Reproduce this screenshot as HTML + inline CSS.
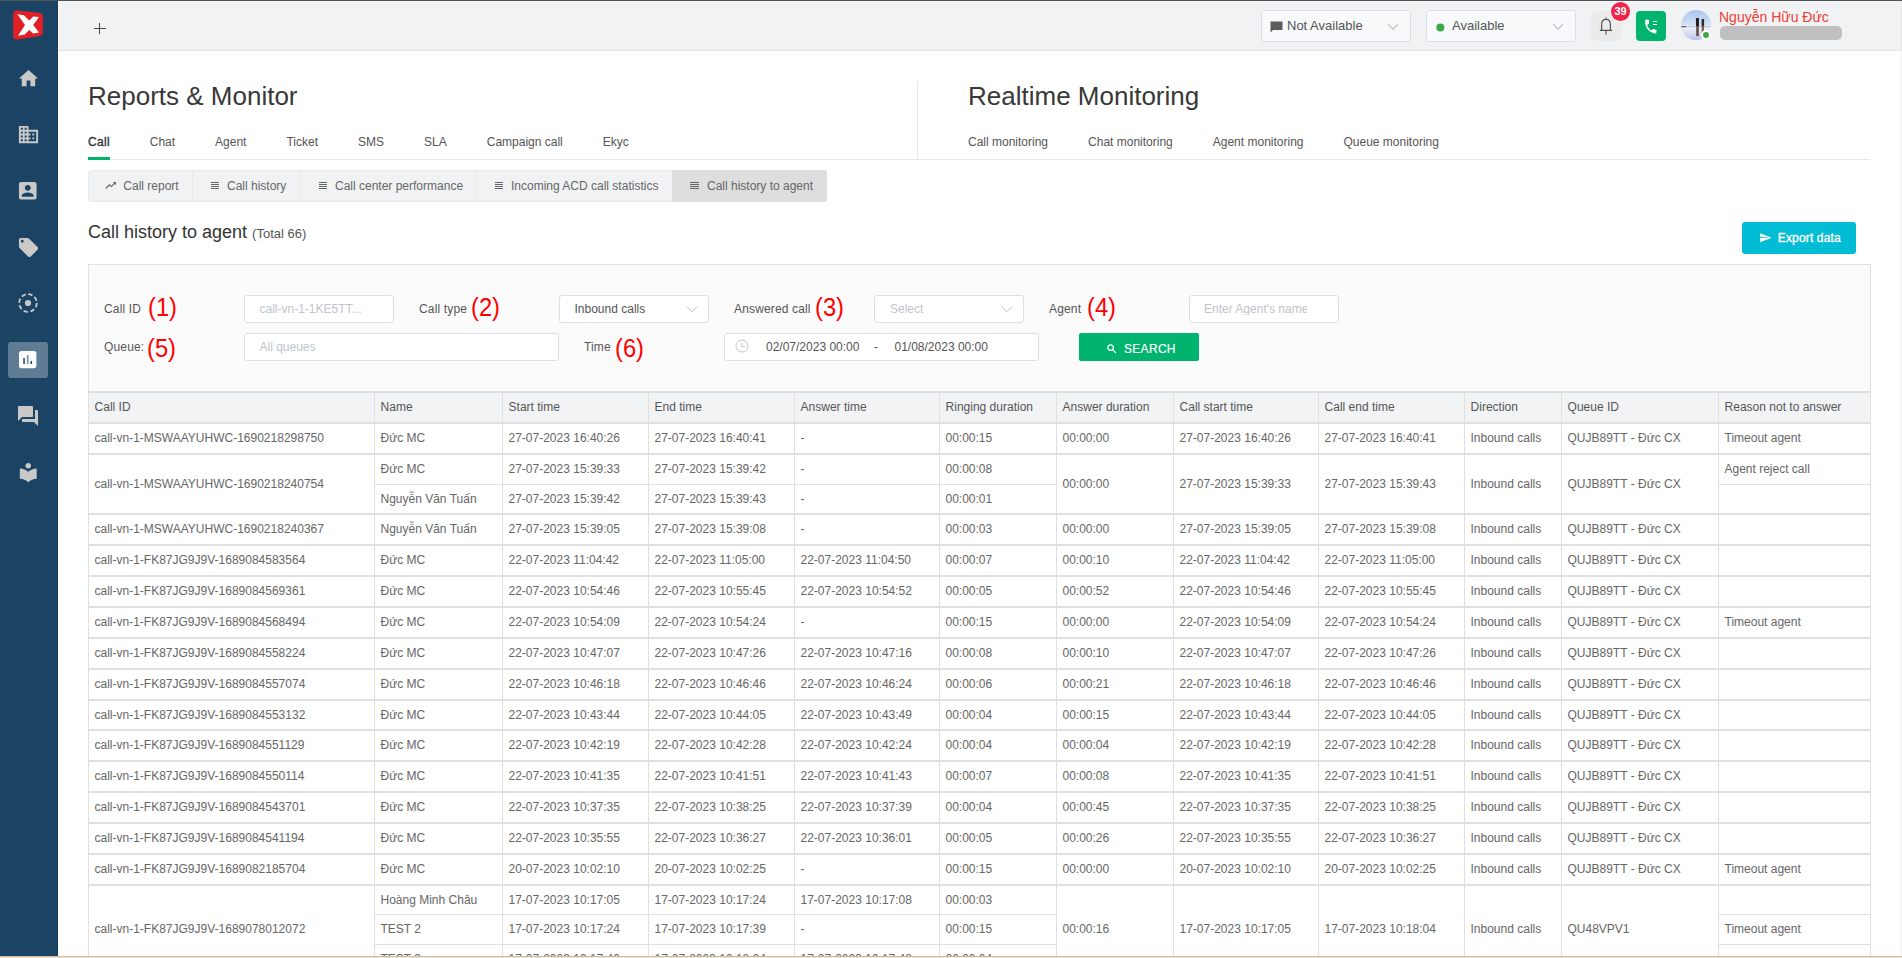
<!DOCTYPE html>
<html><head><meta charset="utf-8"><title>Call history to agent</title>
<style>
html,body{margin:0;padding:0;}
body{width:1902px;height:958px;overflow:hidden;position:relative;background:#fff;font-family:"Liberation Sans",sans-serif;}
.t{position:absolute;line-height:1;white-space:nowrap;font-family:"Liberation Sans",sans-serif;}
svg{position:absolute;overflow:visible;}
</style></head><body>

<div style="position:absolute;left:0px;top:0px;width:1902px;height:1px;background:#505255"></div>
<div style="position:absolute;left:0px;top:1px;width:58px;height:956px;background:#1b4364"></div>
<div style="position:absolute;left:57px;top:1px;width:1px;height:956px;background:#133a5c"></div>
<svg style="left:0;top:0" width="58" height="50" viewBox="0 0 58 50">
<path d="M17.6 10.5 L39 12.7 Q42.8 13.1 42.8 17 L42.8 32 Q42.8 35.8 39 36.2 L17.6 39.5 Q13.2 40.1 13.2 35.5 L13.2 14.6 Q13.2 10.1 17.6 10.5 Z" fill="#e11f26"/>
<path d="M17.4 14.2 L23.9 15.2 L29.3 20.6 L33.2 16.4 L39 17.1 L33.2 25.1 L39 32.6 L33.2 33.4 L29.3 29.9 L24.8 34.6 L18 35.8 L25 25 Z" fill="#fff"/>
</svg>
<div style="position:absolute;left:0px;top:331px;width:57px;height:1px;background:#1a4162"></div>
<div style="position:absolute;left:0px;top:388px;width:57px;height:1px;background:#1a4162"></div>
<svg style="left:16.50px;top:66.98px" width="23" height="23" viewBox="0 0 24 24"><path fill="#c9c9c9" d="M10 20v-6h4v6h5v-8h3L12 3 2 12h3v8z"/></svg>
<svg style="left:16.50px;top:123.00px" width="23" height="23" viewBox="0 0 24 24"><path fill="#c9c9c9" d="M12 7V3H2v18h20V7H12zM6 19H4v-2h2v2zm0-4H4v-2h2v2zm0-4H4V9h2v2zm0-4H4V5h2v2zm4 12H8v-2h2v2zm0-4H8v-2h2v2zm0-4H8V9h2v2zm0-4H8V5h2v2zm10 12h-8v-2h2v-2h-2v-2h2v-2h-2V9h8v10zm-2-8h-2v2h2v-2zm0 4h-2v2h2v-2z"/></svg>
<svg style="left:16.25px;top:178.75px" width="23.5" height="23.5" viewBox="0 0 24 24"><path fill="#c9c9c9" d="M3 5v14c0 1.1.89 2 2 2h14c1.1 0 2-.9 2-2V5c0-1.1-.9-2-2-2H5c-1.11 0-2 .9-2 2zm12 4c0 1.66-1.34 3-3 3s-3-1.34-3-3 1.34-3 3-3 3 1.34 3 3zm-9 8c0-2 4-3.1 6-3.1s6 1.1 6 3.1v1H6v-1z"/></svg>
<svg style="left:16.50px;top:235.50px" width="23" height="23" viewBox="0 0 24 24"><path fill="#c9c9c9" d="M21.41 11.58l-9-9C12.05 2.22 11.55 2 11 2H4c-1.1 0-2 .9-2 2v7c0 .55.22 1.05.59 1.42l9 9c.36.36.86.58 1.41.58.55 0 1.05-.22 1.41-.59l7-7c.37-.36.59-.86.59-1.41 0-.55-.23-1.06-.59-1.42zM5.5 7C4.67 7 4 6.33 4 5.5S4.67 4 5.5 4 7 4.67 7 5.5 6.33 7 5.5 7z"/></svg>
<svg style="left:18.3px;top:292.8px" width="20" height="20" viewBox="0 0 20 20"><circle cx="10" cy="10" r="8.8" fill="none" stroke="#c9c9c9" stroke-width="1.8" stroke-dasharray="4.4 2.5"/><circle cx="10" cy="10" r="3.1" fill="#c9c9c9"/></svg>
<div style="position:absolute;left:8px;top:342px;width:40px;height:36px;background:#607c95;border-radius:3px"></div>
<svg style="left:19.3px;top:351px" width="17.4" height="17.2" viewBox="0 0 17.4 17.2"><rect x="0" y="0" width="17.4" height="17.2" rx="2.6" fill="#fff"/><rect x="4.3" y="7" width="1.5" height="6" fill="#1b4364"/><rect x="7.9" y="4.1" width="1.6" height="8.9" fill="#6f8aa2"/><rect x="11.5" y="9.9" width="1.6" height="3.1" fill="#1b4364"/></svg>
<svg style="left:16.00px;top:404.40px" width="24" height="24" viewBox="0 0 24 24"><path fill="#c9c9c9" d="M21 6h-2v9H6v2c0 .55.45 1 1 1h11l4 4V7c0-.55-.45-1-1-1zm-4 6V3c0-.55-.45-1-1-1H3c-.55 0-1 .45-1 1v14l4-4h10c.55 0 1-.45 1-1z"/></svg>
<svg style="left:16.75px;top:461.29px" width="22.5" height="22.5" viewBox="0 0 24 24"><path fill="#c9c9c9" d="M12 11.55C9.64 9.35 6.48 8 3 8v11c3.48 0 6.64 1.35 9 3.55 2.36-2.19 5.52-3.55 9-3.55V8c-3.48 0-6.64 1.35-9 3.55zM12 8c1.66 0 3-1.34 3-3s-1.34-3-3-3-3 1.34-3 3 1.34 3 3 3z"/></svg>
<div style="position:absolute;left:0px;top:956px;width:1902px;height:1px;background:#c7bba9"></div>
<div style="position:absolute;left:0px;top:957px;width:1902px;height:1px;background:#f7e6ca"></div>
<div style="position:absolute;left:58px;top:1px;width:1844px;height:49px;background:#f1f2f4"></div>
<div style="position:absolute;left:58px;top:1px;width:1px;height:49px;background:#ffffff"></div>
<div style="position:absolute;left:58px;top:50px;width:1844px;height:1px;background:#e1e2e4"></div>
<div style="position:absolute;left:93.5px;top:28px;width:12.5px;height:1px;background:#4a4a4a"></div>
<div style="position:absolute;left:99px;top:23px;width:1px;height:11px;background:#4a4a4a"></div>
<div style="position:absolute;left:1261px;top:10px;width:148px;height:30px;background:#f8f9fa;border:1px solid #dcdfe3;border-radius:3px"></div>
<svg class="bubble" style="left:1270px;top:21px" width="13" height="12" viewBox="0 0 13 12"><path d="M0.5 0.5 H12.5 V9 H3 L0.5 11.5 Z" fill="#5c5c5c"/></svg>
<div class="t" style="left:1287px;top:19px;font-size:13px;color:#555;font-weight:normal;">Not Available</div>
<svg style="left:1387px;top:22.5px" width="12" height="8" viewBox="0 0 12 8"><path d="M1 1.2 L6 6.2 L11 1.2" fill="none" stroke="#b9bcc1" stroke-width="1.1"/></svg>
<div style="position:absolute;left:1426px;top:10px;width:148px;height:30px;background:#f8f9fa;border:1px solid #dcdfe3;border-radius:3px"></div>
<svg style="left:1436px;top:22.5px" width="9" height="9" viewBox="0 0 9 9"><circle cx="4.3" cy="4.6" r="4" fill="#3aaa49"/></svg>
<div class="t" style="left:1452px;top:19px;font-size:13px;color:#555;font-weight:normal;">Available</div>
<svg style="left:1552px;top:22.5px" width="12" height="8" viewBox="0 0 12 8"><path d="M1 1.2 L6 6.2 L11 1.2" fill="none" stroke="#b9bcc1" stroke-width="1.1"/></svg>
<div style="position:absolute;left:1591px;top:10.5px;width:30px;height:30px;background:#ebebeb;border-radius:5px"></div>
<svg style="left:1598px;top:16px" width="16" height="20" viewBox="0 0 16 20"><path d="M8 1.4 V3 M3.6 14 V8.6 Q3.6 3.4 8 3.4 Q12.4 3.4 12.4 8.6 V14 M1.8 14.3 H14.2 M8 15 V18.6" fill="none" stroke="#555" stroke-width="1.2"/></svg>
<svg style="left:1611px;top:2px" width="19" height="19" viewBox="0 0 19 19"><circle cx="9.5" cy="9.5" r="9.5" fill="#ee2549"/></svg>
<div class="t" style="left:1614.5px;top:6px;font-size:11px;color:#fff;font-weight:bold;">39</div>
<div style="position:absolute;left:1636px;top:11px;width:30px;height:30px;background:#00b46e;border-radius:4px"></div>
<svg style="left:1641.5px;top:18px" width="17.5" height="17" viewBox="0 0 24 24"><path transform="rotate(8 12 12)" fill="#fff" d="M6.62 10.79c1.44 2.83 3.76 5.14 6.59 6.59l2.2-2.2c.27-.27.67-.36 1.02-.24 1.12.37 2.33.57 3.57.57.55 0 1 .45 1 1V20c0 .55-.45 1-1 1-9.39 0-17-7.61-17-17 0-.55.45-1 1-1h3.5c.55 0 1 .45 1 1 0 1.25.2 2.45.57 3.57.11.35.03.74-.25 1.02l-2.2 2.2z"/></svg>
<div style="position:absolute;left:1652.5px;top:20.5px;width:4px;height:1.5px;background:#fff"></div>
<div style="position:absolute;left:1652.5px;top:23.5px;width:4px;height:1.5px;background:#fff"></div>
<svg style="left:1680.8px;top:9.8px" width="30.3" height="30.2" viewBox="0 0 30 30">
<defs><linearGradient id="sky" x1="0" y1="0" x2="0" y2="1"><stop offset="0" stop-color="#a9c5ee"/><stop offset="0.5" stop-color="#d6e3f6"/><stop offset="0.58" stop-color="#eef1fa"/><stop offset="1" stop-color="#b8c2ea"/></linearGradient>
<clipPath id="cc"><circle cx="15" cy="15" r="15"/></clipPath></defs>
<g clip-path="url(#cc)"><rect width="30" height="30" fill="url(#sky)"/>
<rect x="0" y="16.3" width="30" height="0.8" fill="#aab2c4"/>
<rect x="0" y="16" width="5" height="1.2" fill="#6a5a5a"/>
<rect x="14.8" y="8" width="3" height="8.5" fill="#241e20"/>
<rect x="15" y="16.5" width="2.7" height="9.5" fill="#6b5446"/>
<rect x="20.4" y="9" width="2.5" height="7.5" fill="#33282a"/>
<rect x="20.5" y="16.5" width="2.3" height="6.5" fill="#7a604e"/>
</g></svg>
<div style="position:absolute;left:1701px;top:29.5px;width:10px;height:10px;background:#fff;border-radius:50%"></div>
<div style="position:absolute;left:1703px;top:31.5px;width:6px;height:6px;background:#3aaa49;border-radius:50%"></div>
<div class="t" style="left:1719px;top:10px;font-size:14px;color:#ee3d35;font-weight:normal;">Nguyễn Hữu Đức</div>
<div style="position:absolute;left:1720px;top:26px;width:122px;height:14px;background:#c0c0c0;border-radius:5px"></div>
<div class="t" style="left:88px;top:83px;font-size:26px;color:#383838;font-weight:normal;">Reports &amp; Monitor</div>
<div class="t" style="left:968px;top:83px;font-size:26px;color:#383838;font-weight:normal;">Realtime Monitoring</div>
<div style="position:absolute;left:88px;top:136px;display:flex;gap:40px;font-size:12px;line-height:1;color:#555;white-space:nowrap"><span style="color:#333;-webkit-text-stroke:0.35px #333;letter-spacing:0.35px;margin-right:-0.35px">Call</span><span style="">Chat</span><span style="">Agent</span><span style="">Ticket</span><span style="">SMS</span><span style="">SLA</span><span style="">Campaign call</span><span style="">Ekyc</span></div>
<div style="position:absolute;left:968px;top:136px;display:flex;gap:40px;font-size:12px;line-height:1;color:#555;white-space:nowrap"><span>Call monitoring</span><span>Chat monitoring</span><span>Agent monitoring</span><span>Queue monitoring</span></div>
<div style="position:absolute;left:88px;top:159px;width:1782px;height:1px;background:#e8e8e8"></div>
<div style="position:absolute;left:88px;top:157px;width:22px;height:3px;background:#00b46e"></div>
<div style="position:absolute;left:917px;top:81px;width:1px;height:78px;background:#e8e8e8"></div>
<div style="position:absolute;left:88px;top:170px;width:739px;height:32px;background:#f1f2f4;border:1px solid #e8e9eb;border-radius:3px;box-sizing:border-box"></div>
<div style="position:absolute;left:672px;top:170px;width:155px;height:32px;background:#dedede;border-radius:0 2px 2px 0"></div>
<div style="position:absolute;left:192px;top:171px;width:1px;height:30px;background:#e6e8ea"></div>
<div style="position:absolute;left:300px;top:171px;width:1px;height:30px;background:#e6e8ea"></div>
<div style="position:absolute;left:476px;top:171px;width:1px;height:30px;background:#e6e8ea"></div>
<svg style="left:105px;top:181px" width="12" height="9" viewBox="0 0 12 9"><path d="M0.8 7.5 L4.4 3.8 L6.4 5.5 L10 1.8" fill="none" stroke="#666" stroke-width="1.15"/><path d="M7.8 1 H11 V4.2 Z" fill="#666"/></svg>
<div style="position:absolute;left:210.5px;top:182px;width:8.5px;height:1px;background:#666"></div>
<div style="position:absolute;left:210.5px;top:184px;width:8.5px;height:1px;background:#666"></div>
<div style="position:absolute;left:210.5px;top:186px;width:8.5px;height:1px;background:#666"></div>
<div style="position:absolute;left:210.5px;top:188px;width:8.5px;height:1px;background:#666"></div>
<div style="position:absolute;left:318.5px;top:182px;width:8.5px;height:1px;background:#666"></div>
<div style="position:absolute;left:318.5px;top:184px;width:8.5px;height:1px;background:#666"></div>
<div style="position:absolute;left:318.5px;top:186px;width:8.5px;height:1px;background:#666"></div>
<div style="position:absolute;left:318.5px;top:188px;width:8.5px;height:1px;background:#666"></div>
<div style="position:absolute;left:494.8px;top:182px;width:8.5px;height:1px;background:#666"></div>
<div style="position:absolute;left:494.8px;top:184px;width:8.5px;height:1px;background:#666"></div>
<div style="position:absolute;left:494.8px;top:186px;width:8.5px;height:1px;background:#666"></div>
<div style="position:absolute;left:494.8px;top:188px;width:8.5px;height:1px;background:#666"></div>
<div style="position:absolute;left:690.3px;top:182px;width:8.5px;height:1px;background:#666"></div>
<div style="position:absolute;left:690.3px;top:184px;width:8.5px;height:1px;background:#666"></div>
<div style="position:absolute;left:690.3px;top:186px;width:8.5px;height:1px;background:#666"></div>
<div style="position:absolute;left:690.3px;top:188px;width:8.5px;height:1px;background:#666"></div>
<div class="t" style="left:123.3px;top:180px;font-size:12px;color:#666;font-weight:normal;">Call report</div>
<div class="t" style="left:227px;top:180px;font-size:12px;color:#666;font-weight:normal;">Call history</div>
<div class="t" style="left:335px;top:180px;font-size:12px;color:#666;font-weight:normal;">Call center performance</div>
<div class="t" style="left:511px;top:180px;font-size:12px;color:#666;font-weight:normal;">Incoming ACD call statistics</div>
<div class="t" style="left:707px;top:180px;font-size:12px;color:#666;font-weight:normal;">Call history to agent</div>
<div class="t" style="left:88px;top:223px;font-size:18px;color:#333">Call history to agent <span style="font-size:13px;color:#555;position:relative;top:0px">(Total 66)</span></div>
<div style="position:absolute;left:1742px;top:222px;width:114px;height:32px;background:#00bcd4;border-radius:3px"></div>
<svg style="left:1759.5px;top:233px" width="12" height="9.4" viewBox="0 0 12 9.4"><path d="M0.2 0.2 L11.6 4.7 L0.2 9.2 Z" fill="#fff"/><path d="M0 4.45 L7.5 4.6" stroke="#00bcd4" stroke-width="0.8"/></svg>
<div class="t" style="left:1777.8px;top:232px;font-size:12px;color:#fff;font-weight:normal;-webkit-text-stroke:0.35px #fff;letter-spacing:0.15px">Export data</div>
<div style="position:absolute;left:88px;top:264px;width:1783px;height:128px;background:#fbfbfb;border:1px solid #e1e1e1;border-bottom:0;box-sizing:border-box"></div>
<div style="position:absolute;left:89px;top:390px;width:1781px;height:1px;background:#ffffff"></div>
<div class="t" style="left:104px;top:303px;font-size:12px;color:#555;font-weight:normal;letter-spacing:0.15px">Call ID</div>
<div class="t" style="left:147.7px;top:294.7px;font-size:25px;color:#ff0000;font-weight:normal;transform:scale(0.95,1.02);transform-origin:0 0">(1)</div>
<div style="position:absolute;left:244px;top:295px;width:150px;height:28px;background:#fff;border:1px solid #dcdfe4;border-radius:3px;box-sizing:border-box"></div>
<div class="t" style="left:259.5px;top:303px;font-size:12px;color:#c0c4cc;font-weight:normal;">call-vn-1-1KE5TT...</div>
<div class="t" style="left:419px;top:303px;font-size:12px;color:#555;font-weight:normal;letter-spacing:0.15px">Call type</div>
<div class="t" style="left:470.7px;top:294.7px;font-size:25px;color:#ff0000;font-weight:normal;transform:scale(0.95,1.02);transform-origin:0 0">(2)</div>
<div style="position:absolute;left:559px;top:295px;width:150px;height:28px;background:#fff;border:1px solid #dcdfe4;border-radius:3px;box-sizing:border-box"></div>
<div class="t" style="left:574.5px;top:303px;font-size:12px;color:#555;font-weight:normal;">Inbound calls</div>
<svg style="left:685.8px;top:305.8px" width="12" height="7" viewBox="0 0 12 7"><path d="M0.6 0.6 L5.8 5.8 L11 0.6" fill="none" stroke="#bfc2c8" stroke-width="1"/></svg>
<div class="t" style="left:734px;top:303px;font-size:12px;color:#555;font-weight:normal;letter-spacing:0.15px">Answered call</div>
<div class="t" style="left:815.2px;top:294.7px;font-size:25px;color:#ff0000;font-weight:normal;transform:scale(0.95,1.02);transform-origin:0 0">(3)</div>
<div style="position:absolute;left:874px;top:295px;width:150px;height:28px;background:#fff;border:1px solid #dcdfe4;border-radius:3px;box-sizing:border-box"></div>
<div class="t" style="left:890px;top:303px;font-size:12px;color:#c0c4cc;font-weight:normal;">Select</div>
<svg style="left:1000.8px;top:305.8px" width="12" height="7" viewBox="0 0 12 7"><path d="M0.6 0.6 L5.8 5.8 L11 0.6" fill="none" stroke="#bfc2c8" stroke-width="1"/></svg>
<div class="t" style="left:1049px;top:303px;font-size:12px;color:#555;font-weight:normal;letter-spacing:0.15px">Agent</div>
<div class="t" style="left:1087.0px;top:294.7px;font-size:25px;color:#ff0000;font-weight:normal;transform:scale(0.95,1.02);transform-origin:0 0">(4)</div>
<div style="position:absolute;left:1189px;top:295px;width:150px;height:28px;background:#fff;border:1px solid #dcdfe4;border-radius:3px;box-sizing:border-box"></div>
<div style="position:absolute;left:1204px;top:303px;width:103px;overflow:hidden;font-size:12px;line-height:1;color:#c0c4cc;white-space:nowrap">Enter Agent's name</div>
<div class="t" style="left:104px;top:341px;font-size:12px;color:#555;font-weight:normal;letter-spacing:0.15px">Queue:</div>
<div class="t" style="left:146.7px;top:335.8px;font-size:25px;color:#ff0000;font-weight:normal;transform:scale(0.95,1.02);transform-origin:0 0">(5)</div>
<div style="position:absolute;left:244px;top:333px;width:315px;height:28px;background:#fff;border:1px solid #dcdfe4;border-radius:3px;box-sizing:border-box"></div>
<div class="t" style="left:259.5px;top:341px;font-size:12px;color:#c0c4cc;font-weight:normal;">All queues</div>
<div class="t" style="left:584px;top:341px;font-size:12px;color:#555;font-weight:normal;letter-spacing:0.15px">Time</div>
<div class="t" style="left:615.4000000000001px;top:335.8px;font-size:25px;color:#ff0000;font-weight:normal;transform:scale(0.95,1.02);transform-origin:0 0">(6)</div>
<div style="position:absolute;left:724px;top:333px;width:315px;height:28px;background:#fff;border:1px solid #dcdfe4;border-radius:3px;box-sizing:border-box"></div>
<svg style="left:735.2px;top:339.3px" width="14" height="14" viewBox="0 0 14 14"><circle cx="7" cy="7" r="6" fill="none" stroke="#c0c4cc" stroke-width="1"/><path d="M6.8 3.8 V7.5 H10" fill="none" stroke="#c0c4cc" stroke-width="1"/></svg>
<div class="t" style="left:766px;top:341px;font-size:12px;color:#555;font-weight:normal;">02/07/2023 00:00</div>
<div class="t" style="left:874px;top:341px;font-size:12px;color:#555;font-weight:normal;">-</div>
<div class="t" style="left:894.5px;top:341px;font-size:12px;color:#555;font-weight:normal;">01/08/2023 00:00</div>
<div style="position:absolute;left:1079px;top:333px;width:120px;height:28px;background:#00b46e;border-radius:2px"></div>
<svg style="left:1106.5px;top:343.5px" width="10" height="10" viewBox="0 0 10 10"><circle cx="3.6" cy="3.6" r="2.8" fill="none" stroke="#fff" stroke-width="1.3"/><path d="M5.6 5.6 L9 9" stroke="#fff" stroke-width="1.3"/></svg>
<div class="t" style="left:1124px;top:343px;font-size:12px;color:#fff;font-weight:normal;letter-spacing:0.3px;-webkit-text-stroke:0.15px #fff">SEARCH</div>
<div style="position:absolute;left:88px;top:393px;width:1782px;height:29px;background:#f2f3f5"></div>
<div class="t" style="left:94.6px;top:401px;font-size:12px;color:#555;font-weight:normal;">Call ID</div>
<div class="t" style="left:380.6px;top:401px;font-size:12px;color:#555;font-weight:normal;">Name</div>
<div class="t" style="left:508.6px;top:401px;font-size:12px;color:#555;font-weight:normal;">Start time</div>
<div class="t" style="left:654.6px;top:401px;font-size:12px;color:#555;font-weight:normal;">End time</div>
<div class="t" style="left:800.6px;top:401px;font-size:12px;color:#555;font-weight:normal;">Answer time</div>
<div class="t" style="left:945.6px;top:401px;font-size:12px;color:#555;font-weight:normal;">Ringing duration</div>
<div class="t" style="left:1062.6px;top:401px;font-size:12px;color:#555;font-weight:normal;">Answer duration</div>
<div class="t" style="left:1179.6px;top:401px;font-size:12px;color:#555;font-weight:normal;">Call start time</div>
<div class="t" style="left:1324.6px;top:401px;font-size:12px;color:#555;font-weight:normal;">Call end time</div>
<div class="t" style="left:1470.6px;top:401px;font-size:12px;color:#555;font-weight:normal;">Direction</div>
<div class="t" style="left:1567.6px;top:401px;font-size:12px;color:#555;font-weight:normal;">Queue ID</div>
<div class="t" style="left:1724.6px;top:401px;font-size:12px;color:#555;font-weight:normal;">Reason not to answer</div>
<div style="position:absolute;left:88px;top:392px;width:1px;height:564px;background:#e0e0e0"></div>
<div style="position:absolute;left:374px;top:392px;width:1px;height:564px;background:#e0e0e0"></div>
<div style="position:absolute;left:502px;top:392px;width:1px;height:564px;background:#e0e0e0"></div>
<div style="position:absolute;left:648px;top:392px;width:1px;height:564px;background:#e0e0e0"></div>
<div style="position:absolute;left:794px;top:392px;width:1px;height:564px;background:#e0e0e0"></div>
<div style="position:absolute;left:939px;top:392px;width:1px;height:564px;background:#e0e0e0"></div>
<div style="position:absolute;left:1056px;top:392px;width:1px;height:564px;background:#e0e0e0"></div>
<div style="position:absolute;left:1173px;top:392px;width:1px;height:564px;background:#e0e0e0"></div>
<div style="position:absolute;left:1318px;top:392px;width:1px;height:564px;background:#e0e0e0"></div>
<div style="position:absolute;left:1464px;top:392px;width:1px;height:564px;background:#e0e0e0"></div>
<div style="position:absolute;left:1561px;top:392px;width:1px;height:564px;background:#e0e0e0"></div>
<div style="position:absolute;left:1718px;top:392px;width:1px;height:564px;background:#e0e0e0"></div>
<div style="position:absolute;left:1870px;top:392px;width:1px;height:564px;background:#e0e0e0"></div>
<div style="position:absolute;left:88px;top:391px;width:1783px;height:2px;background:#dedede"></div>
<div style="position:absolute;left:88px;top:422px;width:1783px;height:2px;background:#e0e0e0"></div>
<div class="t" style="left:94.5px;top:432px;font-size:12px;color:#666;font-weight:normal;">call-vn-1-MSWAAYUHWC-1690218298750</div>
<div class="t" style="left:380.5px;top:432px;font-size:12px;color:#666;font-weight:normal;">Đức MC</div>
<div class="t" style="left:508.5px;top:432px;font-size:12px;color:#666;font-weight:normal;">27-07-2023 16:40:26</div>
<div class="t" style="left:654.5px;top:432px;font-size:12px;color:#666;font-weight:normal;">27-07-2023 16:40:41</div>
<div class="t" style="left:800.5px;top:432px;font-size:12px;color:#666;font-weight:normal;">-</div>
<div class="t" style="left:945.5px;top:432px;font-size:12px;color:#666;font-weight:normal;">00:00:15</div>
<div class="t" style="left:1062.5px;top:432px;font-size:12px;color:#666;font-weight:normal;">00:00:00</div>
<div class="t" style="left:1179.5px;top:432px;font-size:12px;color:#666;font-weight:normal;">27-07-2023 16:40:26</div>
<div class="t" style="left:1324.5px;top:432px;font-size:12px;color:#666;font-weight:normal;">27-07-2023 16:40:41</div>
<div class="t" style="left:1470.5px;top:432px;font-size:12px;color:#666;font-weight:normal;">Inbound calls</div>
<div class="t" style="left:1567.5px;top:432px;font-size:12px;color:#666;font-weight:normal;">QUJB89TT - Đức CX</div>
<div class="t" style="left:1724.5px;top:432px;font-size:12px;color:#666;font-weight:normal;">Timeout agent</div>
<div style="position:absolute;left:88px;top:453px;width:1783px;height:2px;background:#e0e0e0"></div>
<div class="t" style="left:94.5px;top:478px;font-size:12px;color:#666;font-weight:normal;">call-vn-1-MSWAAYUHWC-1690218240754</div>
<div style="position:absolute;left:375px;top:484px;width:127px;height:1px;background:#e0e0e0"></div>
<div class="t" style="left:380.5px;top:463px;font-size:12px;color:#666;font-weight:normal;">Đức MC</div>
<div class="t" style="left:380.5px;top:493px;font-size:12px;color:#666;font-weight:normal;">Nguyễn Văn Tuấn</div>
<div style="position:absolute;left:503px;top:484px;width:145px;height:1px;background:#e0e0e0"></div>
<div class="t" style="left:508.5px;top:463px;font-size:12px;color:#666;font-weight:normal;">27-07-2023 15:39:33</div>
<div class="t" style="left:508.5px;top:493px;font-size:12px;color:#666;font-weight:normal;">27-07-2023 15:39:42</div>
<div style="position:absolute;left:649px;top:484px;width:145px;height:1px;background:#e0e0e0"></div>
<div class="t" style="left:654.5px;top:463px;font-size:12px;color:#666;font-weight:normal;">27-07-2023 15:39:42</div>
<div class="t" style="left:654.5px;top:493px;font-size:12px;color:#666;font-weight:normal;">27-07-2023 15:39:43</div>
<div style="position:absolute;left:795px;top:484px;width:144px;height:1px;background:#e0e0e0"></div>
<div class="t" style="left:800.5px;top:463px;font-size:12px;color:#666;font-weight:normal;">-</div>
<div class="t" style="left:800.5px;top:493px;font-size:12px;color:#666;font-weight:normal;">-</div>
<div style="position:absolute;left:940px;top:484px;width:116px;height:1px;background:#e0e0e0"></div>
<div class="t" style="left:945.5px;top:463px;font-size:12px;color:#666;font-weight:normal;">00:00:08</div>
<div class="t" style="left:945.5px;top:493px;font-size:12px;color:#666;font-weight:normal;">00:00:01</div>
<div class="t" style="left:1062.5px;top:478px;font-size:12px;color:#666;font-weight:normal;">00:00:00</div>
<div class="t" style="left:1179.5px;top:478px;font-size:12px;color:#666;font-weight:normal;">27-07-2023 15:39:33</div>
<div class="t" style="left:1324.5px;top:478px;font-size:12px;color:#666;font-weight:normal;">27-07-2023 15:39:43</div>
<div class="t" style="left:1470.5px;top:478px;font-size:12px;color:#666;font-weight:normal;">Inbound calls</div>
<div class="t" style="left:1567.5px;top:478px;font-size:12px;color:#666;font-weight:normal;">QUJB89TT - Đức CX</div>
<div style="position:absolute;left:1719px;top:484px;width:151px;height:1px;background:#e0e0e0"></div>
<div class="t" style="left:1724.5px;top:463px;font-size:12px;color:#666;font-weight:normal;">Agent reject call</div>
<div style="position:absolute;left:88px;top:513px;width:1783px;height:2px;background:#e0e0e0"></div>
<div class="t" style="left:94.5px;top:523px;font-size:12px;color:#666;font-weight:normal;">call-vn-1-MSWAAYUHWC-1690218240367</div>
<div class="t" style="left:380.5px;top:523px;font-size:12px;color:#666;font-weight:normal;">Nguyễn Văn Tuấn</div>
<div class="t" style="left:508.5px;top:523px;font-size:12px;color:#666;font-weight:normal;">27-07-2023 15:39:05</div>
<div class="t" style="left:654.5px;top:523px;font-size:12px;color:#666;font-weight:normal;">27-07-2023 15:39:08</div>
<div class="t" style="left:800.5px;top:523px;font-size:12px;color:#666;font-weight:normal;">-</div>
<div class="t" style="left:945.5px;top:523px;font-size:12px;color:#666;font-weight:normal;">00:00:03</div>
<div class="t" style="left:1062.5px;top:523px;font-size:12px;color:#666;font-weight:normal;">00:00:00</div>
<div class="t" style="left:1179.5px;top:523px;font-size:12px;color:#666;font-weight:normal;">27-07-2023 15:39:05</div>
<div class="t" style="left:1324.5px;top:523px;font-size:12px;color:#666;font-weight:normal;">27-07-2023 15:39:08</div>
<div class="t" style="left:1470.5px;top:523px;font-size:12px;color:#666;font-weight:normal;">Inbound calls</div>
<div class="t" style="left:1567.5px;top:523px;font-size:12px;color:#666;font-weight:normal;">QUJB89TT - Đức CX</div>
<div style="position:absolute;left:88px;top:544px;width:1783px;height:2px;background:#e0e0e0"></div>
<div class="t" style="left:94.5px;top:554px;font-size:12px;color:#666;font-weight:normal;">call-vn-1-FK87JG9J9V-1689084583564</div>
<div class="t" style="left:380.5px;top:554px;font-size:12px;color:#666;font-weight:normal;">Đức MC</div>
<div class="t" style="left:508.5px;top:554px;font-size:12px;color:#666;font-weight:normal;">22-07-2023 11:04:42</div>
<div class="t" style="left:654.5px;top:554px;font-size:12px;color:#666;font-weight:normal;">22-07-2023 11:05:00</div>
<div class="t" style="left:800.5px;top:554px;font-size:12px;color:#666;font-weight:normal;">22-07-2023 11:04:50</div>
<div class="t" style="left:945.5px;top:554px;font-size:12px;color:#666;font-weight:normal;">00:00:07</div>
<div class="t" style="left:1062.5px;top:554px;font-size:12px;color:#666;font-weight:normal;">00:00:10</div>
<div class="t" style="left:1179.5px;top:554px;font-size:12px;color:#666;font-weight:normal;">22-07-2023 11:04:42</div>
<div class="t" style="left:1324.5px;top:554px;font-size:12px;color:#666;font-weight:normal;">22-07-2023 11:05:00</div>
<div class="t" style="left:1470.5px;top:554px;font-size:12px;color:#666;font-weight:normal;">Inbound calls</div>
<div class="t" style="left:1567.5px;top:554px;font-size:12px;color:#666;font-weight:normal;">QUJB89TT - Đức CX</div>
<div style="position:absolute;left:88px;top:575px;width:1783px;height:2px;background:#e0e0e0"></div>
<div class="t" style="left:94.5px;top:585px;font-size:12px;color:#666;font-weight:normal;">call-vn-1-FK87JG9J9V-1689084569361</div>
<div class="t" style="left:380.5px;top:585px;font-size:12px;color:#666;font-weight:normal;">Đức MC</div>
<div class="t" style="left:508.5px;top:585px;font-size:12px;color:#666;font-weight:normal;">22-07-2023 10:54:46</div>
<div class="t" style="left:654.5px;top:585px;font-size:12px;color:#666;font-weight:normal;">22-07-2023 10:55:45</div>
<div class="t" style="left:800.5px;top:585px;font-size:12px;color:#666;font-weight:normal;">22-07-2023 10:54:52</div>
<div class="t" style="left:945.5px;top:585px;font-size:12px;color:#666;font-weight:normal;">00:00:05</div>
<div class="t" style="left:1062.5px;top:585px;font-size:12px;color:#666;font-weight:normal;">00:00:52</div>
<div class="t" style="left:1179.5px;top:585px;font-size:12px;color:#666;font-weight:normal;">22-07-2023 10:54:46</div>
<div class="t" style="left:1324.5px;top:585px;font-size:12px;color:#666;font-weight:normal;">22-07-2023 10:55:45</div>
<div class="t" style="left:1470.5px;top:585px;font-size:12px;color:#666;font-weight:normal;">Inbound calls</div>
<div class="t" style="left:1567.5px;top:585px;font-size:12px;color:#666;font-weight:normal;">QUJB89TT - Đức CX</div>
<div style="position:absolute;left:88px;top:606px;width:1783px;height:2px;background:#e0e0e0"></div>
<div class="t" style="left:94.5px;top:616px;font-size:12px;color:#666;font-weight:normal;">call-vn-1-FK87JG9J9V-1689084568494</div>
<div class="t" style="left:380.5px;top:616px;font-size:12px;color:#666;font-weight:normal;">Đức MC</div>
<div class="t" style="left:508.5px;top:616px;font-size:12px;color:#666;font-weight:normal;">22-07-2023 10:54:09</div>
<div class="t" style="left:654.5px;top:616px;font-size:12px;color:#666;font-weight:normal;">22-07-2023 10:54:24</div>
<div class="t" style="left:800.5px;top:616px;font-size:12px;color:#666;font-weight:normal;">-</div>
<div class="t" style="left:945.5px;top:616px;font-size:12px;color:#666;font-weight:normal;">00:00:15</div>
<div class="t" style="left:1062.5px;top:616px;font-size:12px;color:#666;font-weight:normal;">00:00:00</div>
<div class="t" style="left:1179.5px;top:616px;font-size:12px;color:#666;font-weight:normal;">22-07-2023 10:54:09</div>
<div class="t" style="left:1324.5px;top:616px;font-size:12px;color:#666;font-weight:normal;">22-07-2023 10:54:24</div>
<div class="t" style="left:1470.5px;top:616px;font-size:12px;color:#666;font-weight:normal;">Inbound calls</div>
<div class="t" style="left:1567.5px;top:616px;font-size:12px;color:#666;font-weight:normal;">QUJB89TT - Đức CX</div>
<div class="t" style="left:1724.5px;top:616px;font-size:12px;color:#666;font-weight:normal;">Timeout agent</div>
<div style="position:absolute;left:88px;top:637px;width:1783px;height:2px;background:#e0e0e0"></div>
<div class="t" style="left:94.5px;top:647px;font-size:12px;color:#666;font-weight:normal;">call-vn-1-FK87JG9J9V-1689084558224</div>
<div class="t" style="left:380.5px;top:647px;font-size:12px;color:#666;font-weight:normal;">Đức MC</div>
<div class="t" style="left:508.5px;top:647px;font-size:12px;color:#666;font-weight:normal;">22-07-2023 10:47:07</div>
<div class="t" style="left:654.5px;top:647px;font-size:12px;color:#666;font-weight:normal;">22-07-2023 10:47:26</div>
<div class="t" style="left:800.5px;top:647px;font-size:12px;color:#666;font-weight:normal;">22-07-2023 10:47:16</div>
<div class="t" style="left:945.5px;top:647px;font-size:12px;color:#666;font-weight:normal;">00:00:08</div>
<div class="t" style="left:1062.5px;top:647px;font-size:12px;color:#666;font-weight:normal;">00:00:10</div>
<div class="t" style="left:1179.5px;top:647px;font-size:12px;color:#666;font-weight:normal;">22-07-2023 10:47:07</div>
<div class="t" style="left:1324.5px;top:647px;font-size:12px;color:#666;font-weight:normal;">22-07-2023 10:47:26</div>
<div class="t" style="left:1470.5px;top:647px;font-size:12px;color:#666;font-weight:normal;">Inbound calls</div>
<div class="t" style="left:1567.5px;top:647px;font-size:12px;color:#666;font-weight:normal;">QUJB89TT - Đức CX</div>
<div style="position:absolute;left:88px;top:668px;width:1783px;height:2px;background:#e0e0e0"></div>
<div class="t" style="left:94.5px;top:678px;font-size:12px;color:#666;font-weight:normal;">call-vn-1-FK87JG9J9V-1689084557074</div>
<div class="t" style="left:380.5px;top:678px;font-size:12px;color:#666;font-weight:normal;">Đức MC</div>
<div class="t" style="left:508.5px;top:678px;font-size:12px;color:#666;font-weight:normal;">22-07-2023 10:46:18</div>
<div class="t" style="left:654.5px;top:678px;font-size:12px;color:#666;font-weight:normal;">22-07-2023 10:46:46</div>
<div class="t" style="left:800.5px;top:678px;font-size:12px;color:#666;font-weight:normal;">22-07-2023 10:46:24</div>
<div class="t" style="left:945.5px;top:678px;font-size:12px;color:#666;font-weight:normal;">00:00:06</div>
<div class="t" style="left:1062.5px;top:678px;font-size:12px;color:#666;font-weight:normal;">00:00:21</div>
<div class="t" style="left:1179.5px;top:678px;font-size:12px;color:#666;font-weight:normal;">22-07-2023 10:46:18</div>
<div class="t" style="left:1324.5px;top:678px;font-size:12px;color:#666;font-weight:normal;">22-07-2023 10:46:46</div>
<div class="t" style="left:1470.5px;top:678px;font-size:12px;color:#666;font-weight:normal;">Inbound calls</div>
<div class="t" style="left:1567.5px;top:678px;font-size:12px;color:#666;font-weight:normal;">QUJB89TT - Đức CX</div>
<div style="position:absolute;left:88px;top:699px;width:1783px;height:2px;background:#e0e0e0"></div>
<div class="t" style="left:94.5px;top:709px;font-size:12px;color:#666;font-weight:normal;">call-vn-1-FK87JG9J9V-1689084553132</div>
<div class="t" style="left:380.5px;top:709px;font-size:12px;color:#666;font-weight:normal;">Đức MC</div>
<div class="t" style="left:508.5px;top:709px;font-size:12px;color:#666;font-weight:normal;">22-07-2023 10:43:44</div>
<div class="t" style="left:654.5px;top:709px;font-size:12px;color:#666;font-weight:normal;">22-07-2023 10:44:05</div>
<div class="t" style="left:800.5px;top:709px;font-size:12px;color:#666;font-weight:normal;">22-07-2023 10:43:49</div>
<div class="t" style="left:945.5px;top:709px;font-size:12px;color:#666;font-weight:normal;">00:00:04</div>
<div class="t" style="left:1062.5px;top:709px;font-size:12px;color:#666;font-weight:normal;">00:00:15</div>
<div class="t" style="left:1179.5px;top:709px;font-size:12px;color:#666;font-weight:normal;">22-07-2023 10:43:44</div>
<div class="t" style="left:1324.5px;top:709px;font-size:12px;color:#666;font-weight:normal;">22-07-2023 10:44:05</div>
<div class="t" style="left:1470.5px;top:709px;font-size:12px;color:#666;font-weight:normal;">Inbound calls</div>
<div class="t" style="left:1567.5px;top:709px;font-size:12px;color:#666;font-weight:normal;">QUJB89TT - Đức CX</div>
<div style="position:absolute;left:88px;top:729px;width:1783px;height:2px;background:#e0e0e0"></div>
<div class="t" style="left:94.5px;top:739px;font-size:12px;color:#666;font-weight:normal;">call-vn-1-FK87JG9J9V-1689084551129</div>
<div class="t" style="left:380.5px;top:739px;font-size:12px;color:#666;font-weight:normal;">Đức MC</div>
<div class="t" style="left:508.5px;top:739px;font-size:12px;color:#666;font-weight:normal;">22-07-2023 10:42:19</div>
<div class="t" style="left:654.5px;top:739px;font-size:12px;color:#666;font-weight:normal;">22-07-2023 10:42:28</div>
<div class="t" style="left:800.5px;top:739px;font-size:12px;color:#666;font-weight:normal;">22-07-2023 10:42:24</div>
<div class="t" style="left:945.5px;top:739px;font-size:12px;color:#666;font-weight:normal;">00:00:04</div>
<div class="t" style="left:1062.5px;top:739px;font-size:12px;color:#666;font-weight:normal;">00:00:04</div>
<div class="t" style="left:1179.5px;top:739px;font-size:12px;color:#666;font-weight:normal;">22-07-2023 10:42:19</div>
<div class="t" style="left:1324.5px;top:739px;font-size:12px;color:#666;font-weight:normal;">22-07-2023 10:42:28</div>
<div class="t" style="left:1470.5px;top:739px;font-size:12px;color:#666;font-weight:normal;">Inbound calls</div>
<div class="t" style="left:1567.5px;top:739px;font-size:12px;color:#666;font-weight:normal;">QUJB89TT - Đức CX</div>
<div style="position:absolute;left:88px;top:760px;width:1783px;height:2px;background:#e0e0e0"></div>
<div class="t" style="left:94.5px;top:770px;font-size:12px;color:#666;font-weight:normal;">call-vn-1-FK87JG9J9V-1689084550114</div>
<div class="t" style="left:380.5px;top:770px;font-size:12px;color:#666;font-weight:normal;">Đức MC</div>
<div class="t" style="left:508.5px;top:770px;font-size:12px;color:#666;font-weight:normal;">22-07-2023 10:41:35</div>
<div class="t" style="left:654.5px;top:770px;font-size:12px;color:#666;font-weight:normal;">22-07-2023 10:41:51</div>
<div class="t" style="left:800.5px;top:770px;font-size:12px;color:#666;font-weight:normal;">22-07-2023 10:41:43</div>
<div class="t" style="left:945.5px;top:770px;font-size:12px;color:#666;font-weight:normal;">00:00:07</div>
<div class="t" style="left:1062.5px;top:770px;font-size:12px;color:#666;font-weight:normal;">00:00:08</div>
<div class="t" style="left:1179.5px;top:770px;font-size:12px;color:#666;font-weight:normal;">22-07-2023 10:41:35</div>
<div class="t" style="left:1324.5px;top:770px;font-size:12px;color:#666;font-weight:normal;">22-07-2023 10:41:51</div>
<div class="t" style="left:1470.5px;top:770px;font-size:12px;color:#666;font-weight:normal;">Inbound calls</div>
<div class="t" style="left:1567.5px;top:770px;font-size:12px;color:#666;font-weight:normal;">QUJB89TT - Đức CX</div>
<div style="position:absolute;left:88px;top:791px;width:1783px;height:2px;background:#e0e0e0"></div>
<div class="t" style="left:94.5px;top:801px;font-size:12px;color:#666;font-weight:normal;">call-vn-1-FK87JG9J9V-1689084543701</div>
<div class="t" style="left:380.5px;top:801px;font-size:12px;color:#666;font-weight:normal;">Đức MC</div>
<div class="t" style="left:508.5px;top:801px;font-size:12px;color:#666;font-weight:normal;">22-07-2023 10:37:35</div>
<div class="t" style="left:654.5px;top:801px;font-size:12px;color:#666;font-weight:normal;">22-07-2023 10:38:25</div>
<div class="t" style="left:800.5px;top:801px;font-size:12px;color:#666;font-weight:normal;">22-07-2023 10:37:39</div>
<div class="t" style="left:945.5px;top:801px;font-size:12px;color:#666;font-weight:normal;">00:00:04</div>
<div class="t" style="left:1062.5px;top:801px;font-size:12px;color:#666;font-weight:normal;">00:00:45</div>
<div class="t" style="left:1179.5px;top:801px;font-size:12px;color:#666;font-weight:normal;">22-07-2023 10:37:35</div>
<div class="t" style="left:1324.5px;top:801px;font-size:12px;color:#666;font-weight:normal;">22-07-2023 10:38:25</div>
<div class="t" style="left:1470.5px;top:801px;font-size:12px;color:#666;font-weight:normal;">Inbound calls</div>
<div class="t" style="left:1567.5px;top:801px;font-size:12px;color:#666;font-weight:normal;">QUJB89TT - Đức CX</div>
<div style="position:absolute;left:88px;top:822px;width:1783px;height:2px;background:#e0e0e0"></div>
<div class="t" style="left:94.5px;top:832px;font-size:12px;color:#666;font-weight:normal;">call-vn-1-FK87JG9J9V-1689084541194</div>
<div class="t" style="left:380.5px;top:832px;font-size:12px;color:#666;font-weight:normal;">Đức MC</div>
<div class="t" style="left:508.5px;top:832px;font-size:12px;color:#666;font-weight:normal;">22-07-2023 10:35:55</div>
<div class="t" style="left:654.5px;top:832px;font-size:12px;color:#666;font-weight:normal;">22-07-2023 10:36:27</div>
<div class="t" style="left:800.5px;top:832px;font-size:12px;color:#666;font-weight:normal;">22-07-2023 10:36:01</div>
<div class="t" style="left:945.5px;top:832px;font-size:12px;color:#666;font-weight:normal;">00:00:05</div>
<div class="t" style="left:1062.5px;top:832px;font-size:12px;color:#666;font-weight:normal;">00:00:26</div>
<div class="t" style="left:1179.5px;top:832px;font-size:12px;color:#666;font-weight:normal;">22-07-2023 10:35:55</div>
<div class="t" style="left:1324.5px;top:832px;font-size:12px;color:#666;font-weight:normal;">22-07-2023 10:36:27</div>
<div class="t" style="left:1470.5px;top:832px;font-size:12px;color:#666;font-weight:normal;">Inbound calls</div>
<div class="t" style="left:1567.5px;top:832px;font-size:12px;color:#666;font-weight:normal;">QUJB89TT - Đức CX</div>
<div style="position:absolute;left:88px;top:853px;width:1783px;height:2px;background:#e0e0e0"></div>
<div class="t" style="left:94.5px;top:863px;font-size:12px;color:#666;font-weight:normal;">call-vn-1-FK87JG9J9V-1689082185704</div>
<div class="t" style="left:380.5px;top:863px;font-size:12px;color:#666;font-weight:normal;">Đức MC</div>
<div class="t" style="left:508.5px;top:863px;font-size:12px;color:#666;font-weight:normal;">20-07-2023 10:02:10</div>
<div class="t" style="left:654.5px;top:863px;font-size:12px;color:#666;font-weight:normal;">20-07-2023 10:02:25</div>
<div class="t" style="left:800.5px;top:863px;font-size:12px;color:#666;font-weight:normal;">-</div>
<div class="t" style="left:945.5px;top:863px;font-size:12px;color:#666;font-weight:normal;">00:00:15</div>
<div class="t" style="left:1062.5px;top:863px;font-size:12px;color:#666;font-weight:normal;">00:00:00</div>
<div class="t" style="left:1179.5px;top:863px;font-size:12px;color:#666;font-weight:normal;">20-07-2023 10:02:10</div>
<div class="t" style="left:1324.5px;top:863px;font-size:12px;color:#666;font-weight:normal;">20-07-2023 10:02:25</div>
<div class="t" style="left:1470.5px;top:863px;font-size:12px;color:#666;font-weight:normal;">Inbound calls</div>
<div class="t" style="left:1567.5px;top:863px;font-size:12px;color:#666;font-weight:normal;">QUJB89TT - Đức CX</div>
<div class="t" style="left:1724.5px;top:863px;font-size:12px;color:#666;font-weight:normal;">Timeout agent</div>
<div style="position:absolute;left:88px;top:884px;width:1783px;height:2px;background:#e0e0e0"></div>
<div class="t" style="left:94.5px;top:923px;font-size:12px;color:#666;font-weight:normal;">call-vn-1-FK87JG9J9V-1689078012072</div>
<div style="position:absolute;left:375px;top:914px;width:127px;height:1px;background:#e0e0e0"></div>
<div class="t" style="left:380.5px;top:894px;font-size:12px;color:#666;font-weight:normal;">Hoàng Minh Châu</div>
<div style="position:absolute;left:375px;top:944px;width:127px;height:1px;background:#e0e0e0"></div>
<div class="t" style="left:380.5px;top:923px;font-size:12px;color:#666;font-weight:normal;">TEST 2</div>
<div class="t" style="left:380.5px;top:953px;font-size:12px;color:#666;font-weight:normal;">TEST 3</div>
<div style="position:absolute;left:503px;top:914px;width:145px;height:1px;background:#e0e0e0"></div>
<div class="t" style="left:508.5px;top:894px;font-size:12px;color:#666;font-weight:normal;">17-07-2023 10:17:05</div>
<div style="position:absolute;left:503px;top:944px;width:145px;height:1px;background:#e0e0e0"></div>
<div class="t" style="left:508.5px;top:923px;font-size:12px;color:#666;font-weight:normal;">17-07-2023 10:17:24</div>
<div class="t" style="left:508.5px;top:953px;font-size:12px;color:#666;font-weight:normal;">17-07-2023 10:17:40</div>
<div style="position:absolute;left:649px;top:914px;width:145px;height:1px;background:#e0e0e0"></div>
<div class="t" style="left:654.5px;top:894px;font-size:12px;color:#666;font-weight:normal;">17-07-2023 10:17:24</div>
<div style="position:absolute;left:649px;top:944px;width:145px;height:1px;background:#e0e0e0"></div>
<div class="t" style="left:654.5px;top:923px;font-size:12px;color:#666;font-weight:normal;">17-07-2023 10:17:39</div>
<div class="t" style="left:654.5px;top:953px;font-size:12px;color:#666;font-weight:normal;">17-07-2023 10:18:04</div>
<div style="position:absolute;left:795px;top:914px;width:144px;height:1px;background:#e0e0e0"></div>
<div class="t" style="left:800.5px;top:894px;font-size:12px;color:#666;font-weight:normal;">17-07-2023 10:17:08</div>
<div style="position:absolute;left:795px;top:944px;width:144px;height:1px;background:#e0e0e0"></div>
<div class="t" style="left:800.5px;top:923px;font-size:12px;color:#666;font-weight:normal;">-</div>
<div class="t" style="left:800.5px;top:953px;font-size:12px;color:#666;font-weight:normal;">17-07-2023 10:17:48</div>
<div style="position:absolute;left:940px;top:914px;width:116px;height:1px;background:#e0e0e0"></div>
<div class="t" style="left:945.5px;top:894px;font-size:12px;color:#666;font-weight:normal;">00:00:03</div>
<div style="position:absolute;left:940px;top:944px;width:116px;height:1px;background:#e0e0e0"></div>
<div class="t" style="left:945.5px;top:923px;font-size:12px;color:#666;font-weight:normal;">00:00:15</div>
<div class="t" style="left:945.5px;top:953px;font-size:12px;color:#666;font-weight:normal;">00:00:04</div>
<div class="t" style="left:1062.5px;top:923px;font-size:12px;color:#666;font-weight:normal;">00:00:16</div>
<div class="t" style="left:1179.5px;top:923px;font-size:12px;color:#666;font-weight:normal;">17-07-2023 10:17:05</div>
<div class="t" style="left:1324.5px;top:923px;font-size:12px;color:#666;font-weight:normal;">17-07-2023 10:18:04</div>
<div class="t" style="left:1470.5px;top:923px;font-size:12px;color:#666;font-weight:normal;">Inbound calls</div>
<div class="t" style="left:1567.5px;top:923px;font-size:12px;color:#666;font-weight:normal;">QU48VPV1</div>
<div style="position:absolute;left:1719px;top:914px;width:151px;height:1px;background:#e0e0e0"></div>
<div style="position:absolute;left:1719px;top:944px;width:151px;height:1px;background:#e0e0e0"></div>
<div class="t" style="left:1724.5px;top:923px;font-size:12px;color:#666;font-weight:normal;">Timeout agent</div>
<div style="position:absolute;left:1901px;top:51px;width:1px;height:905px;background:#eeeeee"></div>
<div style="position:absolute;left:1901px;top:1px;width:1px;height:49px;background:#e6e7e9"></div>
<div style="position:absolute;left:0px;top:956px;width:1902px;height:1px;background:#c7bba9"></div>
<div style="position:absolute;left:0px;top:957px;width:1902px;height:1px;background:#f7e6ca"></div>
</body></html>
